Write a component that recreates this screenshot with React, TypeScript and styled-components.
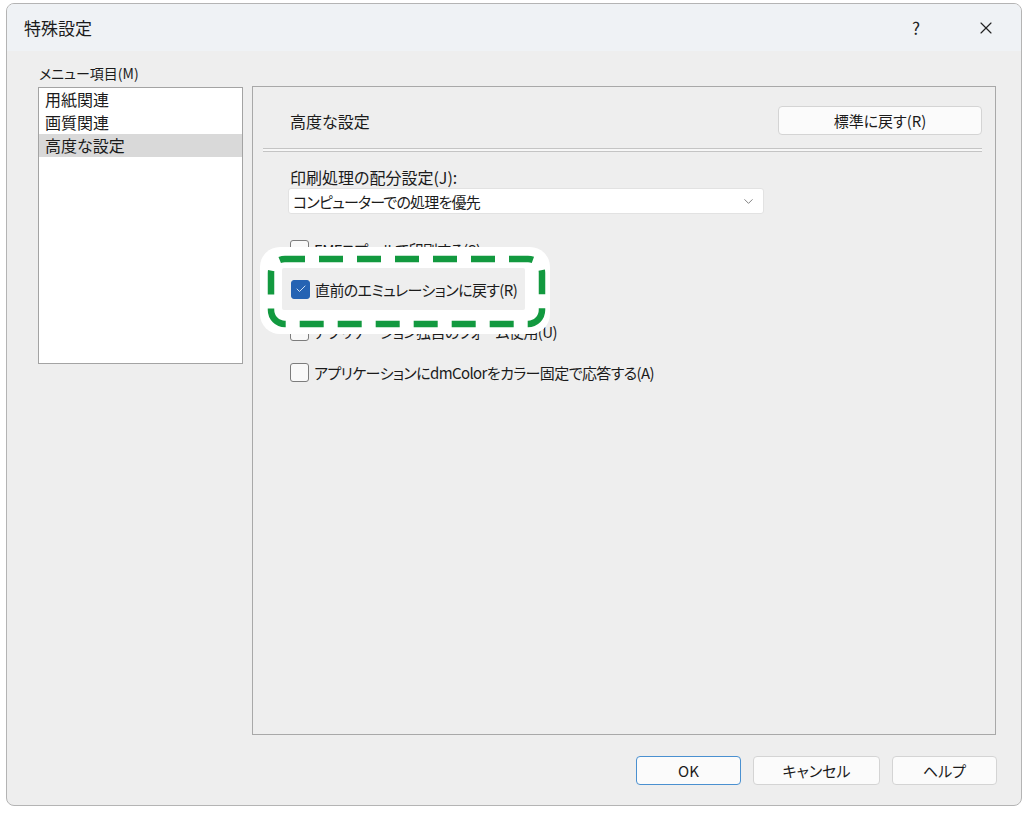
import styled, { createGlobalStyle } from "styled-components";
import { ChevronDown, Check, X } from "lucide-react";

const GlobalStyle = createGlobalStyle`
  html, body {
    margin: 0;
    background: #ffffff;
  }
  body {
    font-family: "Noto Sans CJK JP", "Noto Sans", sans-serif;
    font-feature-settings: "palt";
    color: #1b1b1b;
  }
`;

const Dialog = styled.div`
  box-sizing: border-box;
  width: 1016px;
  height: 803px;
  margin: 3px 0 0 6px;
  border: 1px solid #b4b4b4;
  border-radius: 8px;
  background: #eeeeee;
  display: flex;
  flex-direction: column;
  overflow: hidden;
`;

const TitleBar = styled.div`
  height: 47px;
  flex-shrink: 0;
  display: flex;
  align-items: center;
  padding-left: 17px;
  background: #eff2f5;
`;

const Title = styled.div`
  flex: 1;
  font-size: 17px;
`;

const TitleButton = styled.div`
  width: 70px;
  height: 47px;
  display: flex;
  align-items: center;
  justify-content: center;
  font-size: 17px;
  color: #222;
`;

const Body = styled.div`
  flex: 1;
  display: flex;
  flex-direction: column;
  padding: 12px 24px 0 31px;
`;

const MainRow = styled.div`
  display: flex;
  align-items: flex-start;
`;

const LeftColumn = styled.div`
  width: 205px;
  flex-shrink: 0;
`;

const SmallLabel = styled.div`
  font-size: 14px;
  line-height: 20px;
  padding-left: 1px;
`;

const ListBox = styled.div`
  box-sizing: border-box;
  margin-top: 4px;
  height: 277px;
  background: #ffffff;
  border: 1px solid #a3a3a3;
`;

const ListItem = styled.div<{ $selected?: boolean }>`
  height: 23px;
  line-height: 23px;
  padding-left: 6px;
  font-size: 16px;
  background: ${({ $selected }) => ($selected ? "#d9d9d9" : "transparent")};
`;

const Panel = styled.div`
  position: relative;
  box-sizing: border-box;
  margin: 23px 0 0 9px;
  width: 744px;
  height: 649px;
  border: 1px solid #a8a8a8;
  background: #eeeeee;
`;

const HeaderRow = styled.div`
  display: flex;
  align-items: center;
  justify-content: space-between;
  margin: 19px 13px 0 37px;
`;

const Heading = styled.div`
  font-size: 16px;
`;

const Button = styled.button<{ $width: number; $default?: boolean }>`
  box-sizing: border-box;
  width: ${({ $width }) => $width}px;
  height: 29px;
  padding: 0;
  background: #fbfbfb;
  border: 1px solid ${({ $default }) => ($default ? "#4a90d0" : "#d4d4d4")};
  border-radius: 4px;
  font-family: inherit;
  font-feature-settings: "palt";
  font-size: 15px;
  color: #1b1b1b;
`;

const Separator = styled.div`
  margin: 13px 13px 0 10px;
  height: 2px;
  border-top: 1px solid #c4c4c4;
  border-bottom: 1px solid #c4c4c4;
  background: #f7f7f7;
`;

const FieldLabel = styled.div`
  margin: 14px 0 0 37px;
  font-size: 16px;
  line-height: 22px;
`;

const Combo = styled.div`
  box-sizing: border-box;
  margin-left: 35px;
  width: 476px;
  height: 26px;
  display: flex;
  align-items: center;
  justify-content: space-between;
  padding: 0 7px 0 4px;
  background: #ffffff;
  border: 1px solid #e2e2e2;
  border-radius: 3px;
  color: #7a7a7a;

  span {
    color: #1b1b1b;
    font-size: 15px;
    letter-spacing: -0.8px;
  }
`;

const CheckList = styled.div`
  margin: 15px 0 0 37px;
`;

const CheckRow = styled.div`
  height: 41px;
  display: flex;
  align-items: center;
  gap: 5px;
  font-size: 15px;
  letter-spacing: -0.6px;
  white-space: nowrap;
`;

const Box = styled.div<{ $checked?: boolean }>`
  box-sizing: border-box;
  flex-shrink: 0;
  width: 19px;
  height: 19px;
  border-radius: 3px;
  display: flex;
  align-items: center;
  justify-content: center;
  border: 1px solid ${({ $checked }) => ($checked ? "#2563b3" : "#7c7c7c")};
  background: ${({ $checked }) => ($checked ? "#2563b3" : "#f9f9f9")};
  color: #cfe0f5;
`;

const Annotation = styled.div`
  position: absolute;
  left: 7px;
  top: 160px;
  width: 290px;
  height: 87px;
  background: #ffffff;
  border-radius: 20px;
`;

const DashOutline = styled.svg`
  position: absolute;
  left: 0;
  top: 0;
`;

const HighlightWindow = styled.div`
  position: absolute;
  left: 22px;
  top: 21px;
  width: 243px;
  height: 42px;
  display: flex;
  align-items: center;
  gap: 5px;
  padding-left: 9px;
  box-sizing: border-box;
  background: #eeeeee;
  border-radius: 2px;
  font-size: 15px;
  letter-spacing: -0.6px;
  white-space: nowrap;
`;

const Footer = styled.div`
  display: flex;
  justify-content: flex-end;
  gap: 12px;
  margin-top: 21px;
`;

export default function App() {
  return (
    <>
      <GlobalStyle />
      <Dialog>
        <TitleBar>
          <Title>特殊設定</Title>
          <TitleButton>?</TitleButton>
          <TitleButton>
            <X size={20} strokeWidth={1.4} />
          </TitleButton>
        </TitleBar>
        <Body>
          <MainRow>
            <LeftColumn>
              <SmallLabel>メニュー項目(M)</SmallLabel>
              <ListBox>
                <ListItem>用紙関連</ListItem>
                <ListItem>画質関連</ListItem>
                <ListItem $selected>高度な設定</ListItem>
              </ListBox>
            </LeftColumn>
            <Panel>
              <HeaderRow>
                <Heading>高度な設定</Heading>
                <Button $width={204}>標準に戻す(R)</Button>
              </HeaderRow>
              <Separator />
              <FieldLabel>印刷処理の配分設定(J):</FieldLabel>
              <Combo>
                <span>コンピューターでの処理を優先</span>
                <ChevronDown size={15} strokeWidth={1.5} />
              </Combo>
              <CheckList>
                <CheckRow>
                  <Box />
                  EMFスプールで印刷する(S)
                </CheckRow>
                <CheckRow>
                  <Box $checked>
                    <Check size={12} strokeWidth={2} />
                  </Box>
                  直前のエミュレーションに戻す(R)
                </CheckRow>
                <CheckRow>
                  <Box />
                  アプリケーション独自のフォーム使用(U)
                </CheckRow>
                <CheckRow>
                  <Box />
                  アプリケーションにdmColorをカラー固定で応答する(A)
                </CheckRow>
              </CheckList>
              <Annotation>
                <DashOutline width="290" height="87" viewBox="0 0 290 87">
                  <rect
                    x="11"
                    y="12"
                    width="271"
                    height="65"
                    rx="14"
                    fill="none"
                    stroke="#12993f"
                    strokeWidth="6.5"
                    strokeDasharray="24 14"
                    strokeDashoffset="4"
                  />
                </DashOutline>
                <HighlightWindow>
                  <Box $checked>
                    <Check size={12} strokeWidth={2} />
                  </Box>
                  直前のエミュレーションに戻す(R)
                </HighlightWindow>
              </Annotation>
            </Panel>
          </MainRow>
          <Footer>
            <Button $width={105} $default>OK</Button>
            <Button $width={127}>キャンセル</Button>
            <Button $width={105}>ヘルプ</Button>
          </Footer>
        </Body>
      </Dialog>
    </>
  );
}
